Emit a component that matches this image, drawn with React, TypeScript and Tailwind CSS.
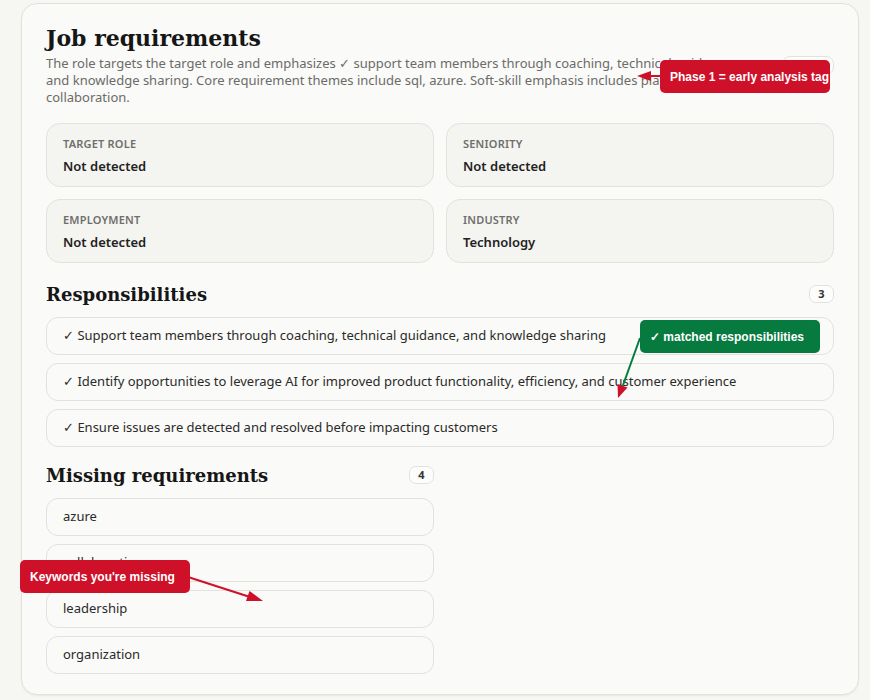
import React from "react";

const serif = { fontFamily: '"DejaVu Serif", Georgia, serif' };

function InfoCard({ label, value }: { label: string; value: string }) {
  return (
    <div className="h-[64px] rounded-[14px] border border-[#e2e2dd] bg-[#f4f4f1] px-4 pt-[12px]">
      <div className="text-[11px] leading-4 font-semibold uppercase tracking-[0.2px] text-[#6f6f6c]">{label}</div>
      <div className="mt-[5px] text-[13px] leading-[18px] font-semibold text-[#222]">{value}</div>
    </div>
  );
}

function Badge({ n }: { n: number }) {
  return (
    <span className="flex h-[18px] w-[25px] items-center justify-center rounded-[7px] border border-[#e2e2dd] bg-[#fdfdfb] text-[11px] font-bold text-[#333]">
      {n}
    </span>
  );
}

function Item({ children }: { children: React.ReactNode }) {
  return (
    <div className="flex h-[38px] items-center rounded-[12px] border border-[#e2e2dd] bg-[#fafaf8] px-4 text-[13px] text-[#2a2a2a]">
      {children}
    </div>
  );
}

export default function App() {
  return (
    <div
      className="relative min-h-[700px] bg-[#f6f6f2] pt-[3px] pl-[21px]"
      style={{ fontFamily: '"Noto Sans", "Open Sans", sans-serif' }}
    >
      <div className="w-[838px] rounded-[16px] border border-[#e2e2dd] bg-[#fafaf8] px-6 pt-[20px] pb-[20px] shadow-[0_1px_2px_rgba(0,0,0,0.06)]">
        <div className="flex items-center justify-between gap-6">
          <div className="max-w-[712px]">
            <h1 className="text-[22px] leading-[28px] font-bold text-[#161616]" style={serif}>
              Job requirements
            </h1>
            <p className="mt-[3px] text-[13px] leading-[17px] text-[#6b6b68]">
              The role targets the target role and emphasizes ✓ support team members through coaching, technical guidance,
              and knowledge sharing. Core requirement themes include sql, azure. Soft-skill emphasis includes planning, and
              collaboration.
            </p>
          </div>
          <span className="flex h-[19px] w-[56px] items-center justify-center rounded-[8px] border border-[#e2e2dd] bg-[#fdfdfb] text-[11px] text-[#333]">
            Phase 1
          </span>
        </div>

        <div className="mt-[17px] grid grid-cols-2 gap-x-[12px] gap-y-3">
          <InfoCard label="Target role" value="Not detected" />
          <InfoCard label="Seniority" value="Not detected" />
          <InfoCard label="Employment" value="Not detected" />
          <InfoCard label="Industry" value="Technology" />
        </div>

        <div className="mt-[19px] flex h-6 items-center justify-between">
          <h2 className="text-[18px] font-bold text-[#161616]" style={serif}>Responsibilities</h2>
          <Badge n={3} />
        </div>
        <div className="mt-[11px] flex flex-col gap-2">
          <Item>✓ Support team members through coaching, technical guidance, and knowledge sharing</Item>
          <Item>✓ Identify opportunities to leverage AI for improved product functionality, efficiency, and customer experience</Item>
          <Item>✓ Ensure issues are detected and resolved before impacting customers</Item>
        </div>

        <div className="mt-[16px] grid grid-cols-2 gap-x-[12px]">
          <div>
            <div className="flex h-6 items-center justify-between">
              <h2 className="text-[18px] font-bold text-[#161616]" style={serif}>Missing requirements</h2>
              <Badge n={4} />
            </div>
            <div className="mt-[11px] flex flex-col gap-2">
              <Item>azure</Item>
              <Item>collaboration</Item>
              <Item>leadership</Item>
              <Item>organization</Item>
            </div>
          </div>
        </div>
      </div>

      {/* annotations */}
      <svg className="pointer-events-none absolute left-0 top-0" width="870" height="700">
        <line x1="662" y1="76" x2="648" y2="76" stroke="#cf1029" strokeWidth="2" />
        <polygon points="637,76 651,71 651,81" fill="#cf1029" />
        <line x1="640" y1="338" x2="622" y2="388" stroke="#067a3f" strokeWidth="2" />
        <polygon points="618,398 627.5,387.5 617.5,384" fill="#cf1029" />
        <line x1="188" y1="577" x2="250" y2="597" stroke="#cf1029" strokeWidth="2" />
        <polygon points="263,601 246,601 249.5,591" fill="#cf1029" />
      </svg>
      <div
        className="absolute left-[660px] top-[60px] flex h-[33px] w-[170px] items-center rounded-[5px] bg-[#cf1029] pl-[10px] text-[12px] font-bold text-white"
        style={{ fontFamily: '"Liberation Sans", Arial, sans-serif' }}
      >
        Phase 1 = early analysis tag
      </div>
      <div
        className="absolute left-[640px] top-[320px] flex h-[33px] w-[180px] items-center rounded-[5px] bg-[#067a3f] pl-[10px] text-[12px] font-bold text-white"
        style={{ fontFamily: '"Liberation Sans", Arial, sans-serif' }}
      >
        ✓ matched responsibilities
      </div>
      <div
        className="absolute left-[20px] top-[560px] flex h-[33px] w-[170px] items-center rounded-[5px] bg-[#cf1029] pl-[10px] text-[12px] font-bold text-white"
        style={{ fontFamily: '"Liberation Sans", Arial, sans-serif' }}
      >
        Keywords you're missing
      </div>
    </div>
  );
}
